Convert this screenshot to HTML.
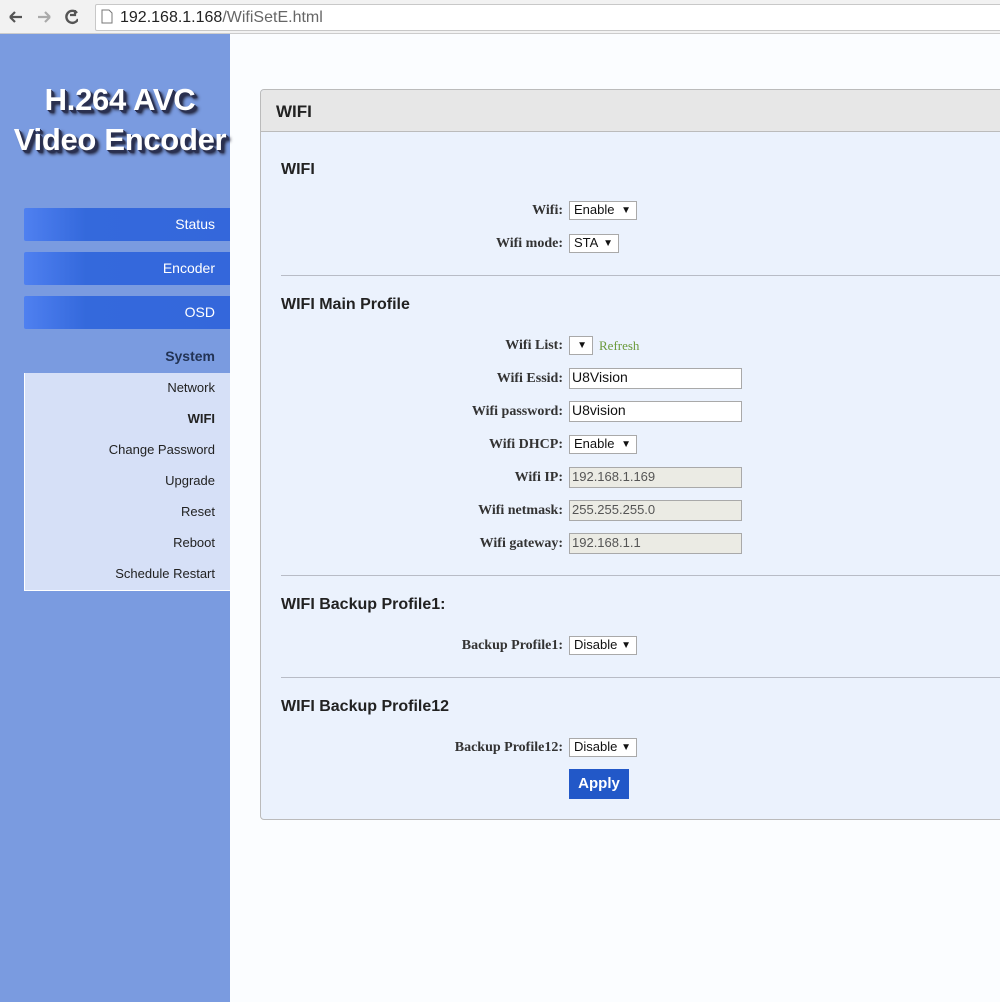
<!DOCTYPE html>
<html><head><meta charset="utf-8"><style>
*{margin:0;padding:0;box-sizing:border-box}
body{width:1000px;height:1002px;overflow:hidden;position:relative;background:#fbfdff;font-family:"Liberation Sans",sans-serif}
.a{position:absolute}
.bar{left:0;top:0;width:1000px;height:34px;background:#f2f2f2;border-bottom:1px solid #ccc}
.url{left:95px;top:4px;width:910px;height:27px;background:#fff;border:1px solid #c8c8c8;border-radius:2px;font-size:16px;color:#222;padding:4px 0 0 24px}
.side{left:0;top:34px;width:230px;height:968px;background:#7a9be0}
.logo{left:0;top:80px;width:240px;text-align:center;color:#fff;font-weight:bold;font-size:31px;line-height:40px;letter-spacing:-0.3px;text-shadow:1px 1px 0 #2a3050,2px 2px 0 #2a3050,3px 3px 1px #2a3050,4px 4px 3px #223}
.btn{left:24px;width:206px;height:33px;background:linear-gradient(90deg,#4f80f0,#3469dc 30%,#3467db);color:#fff;font-size:14px;text-align:right;padding:8px 15px 0 0;border-radius:2px 0 0 2px}
.sys{left:24px;top:348px;width:191px;text-align:right;font-weight:bold;font-size:14px;color:#223355}
.sub{left:24px;top:373px;width:206px;height:218px;background:#d6e0f7;border:1px solid #fff;border-top:none;border-right:none}
.sub div{position:absolute;right:15px;font-size:13px;color:#222}
.panel{left:260px;top:89px;width:760px;height:731px;background:#ebf2fd;border:1px solid #bbb;border-radius:4px}
.ph{left:0;top:0;width:100%;height:42px;background:#e7e7e7;border-bottom:1px solid #bbb;font-weight:bold;font-size:17px;color:#222;padding:12px 0 0 15px;border-radius:4px 0 0 0}
h3{position:absolute;left:281px;font-size:16px;font-weight:bold;color:#222}
.hr{left:281px;width:719px;height:1px;background:#b8bcc6}
.lb{position:absolute;right:437px;font-family:"Liberation Serif",serif;font-weight:bold;font-size:14px;color:#333;text-align:right}
.sel{position:absolute;left:569px;height:19px;background:#fff;border:1px solid #a9a9a9;font-size:13px;line-height:16px;color:#111;padding:0 0 0 4px}
.sel span{position:absolute;right:5px;top:1px;font-size:10px}
.in{position:absolute;left:569px;width:173px;height:21px;background:#fff;border:1px solid #a9a9a9;font-size:14px;line-height:17px;color:#111;padding:0 0 0 2px}
.in.d{background:#ebebe4;color:#555;font-size:13px}
</style></head><body>
<div class="a bar"></div>
<svg class="a" style="left:8px;top:9px" width="70" height="16" viewBox="0 0 70 16"><path d="M2 8h12M2 8l5-5M2 8l5 5" stroke="#555" stroke-width="2.2" fill="none"/><path d="M30 8h12M42 8l-5-5M42 8l-5 5" stroke="#aaa" stroke-width="2.2" fill="none"/><path d="M72 4 A6 6 0 1 0 73 10" transform="translate(-3,0)" stroke="#555" stroke-width="2.4" fill="none"/><path d="M67 1v5h-5" stroke="#555" stroke-width="2.2" fill="none"/></svg>
<div class="a url">192.168.1.168<span style="color:#666">/WifiSetE.html</span></div>
<svg class="a" style="left:101px;top:9px" width="12" height="15"><path d="M1 1h7l3 3v10H1z" fill="#fff" stroke="#777"/></svg>
<div class="a side"></div>
<div class="a logo">H.264 AVC<br>Video Encoder</div>
<div class="a btn" style="top:208px">Status</div>
<div class="a btn" style="top:252px">Encoder</div>
<div class="a btn" style="top:296px">OSD</div>
<div class="a sys">System</div>
<div class="a sub">
<div style="top:7px">Network</div>
<div style="top:38px;font-weight:bold">WIFI</div>
<div style="top:69px">Change Password</div>
<div style="top:100px">Upgrade</div>
<div style="top:131px">Reset</div>
<div style="top:162px">Reboot</div>
<div style="top:193px">Schedule Restart</div>
</div>
<div class="a" style="left:226px;top:414px;width:0;height:0;border:5px solid transparent;border-right-color:#fbfdff"></div>
<div class="a panel"><div class="a ph">WIFI</div></div>
<h3 style="top:161px">WIFI</h3>
<div class="lb" style="top:203px">Wifi:</div><div class="sel" style="top:201px;width:68px">Enable<span>▼</span></div>
<div class="lb" style="top:236px">Wifi mode:</div><div class="sel" style="top:234px;width:50px">STA<span>▼</span></div>
<div class="a hr" style="top:275px"></div>
<h3 style="top:296px">WIFI Main Profile</h3>
<div class="lb" style="top:338px">Wifi List:</div><div class="sel" style="top:336px;width:24px"><span>▼</span></div>
<div class="a" style="left:599px;top:338px;font-family:'Liberation Serif',serif;font-size:13px;color:#6a9a3a">Refresh</div>
<div class="lb" style="top:371px">Wifi Essid:</div><div class="in" style="top:368px">U8Vision</div>
<div class="lb" style="top:404px">Wifi password:</div><div class="in" style="top:401px">U8vision</div>
<div class="lb" style="top:437px">Wifi DHCP:</div><div class="sel" style="top:435px;width:68px">Enable<span>▼</span></div>
<div class="lb" style="top:470px">Wifi IP:</div><div class="in d" style="top:467px">192.168.1.169</div>
<div class="lb" style="top:503px">Wifi netmask:</div><div class="in d" style="top:500px">255.255.255.0</div>
<div class="lb" style="top:536px">Wifi gateway:</div><div class="in d" style="top:533px">192.168.1.1</div>
<div class="a hr" style="top:575px"></div>
<h3 style="top:596px">WIFI Backup Profile1:</h3>
<div class="lb" style="top:638px">Backup Profile1:</div><div class="sel" style="top:636px;width:68px">Disable<span>▼</span></div>
<div class="a hr" style="top:677px"></div>
<h3 style="top:698px">WIFI Backup Profile12</h3>
<div class="lb" style="top:740px">Backup Profile12:</div><div class="sel" style="top:738px;width:68px">Disable<span>▼</span></div>
<div class="a" style="left:569px;top:769px;width:60px;height:30px;background:#2258c8;color:#fff;font-weight:bold;font-size:15px;text-align:center;padding-top:6px">Apply</div>
</body></html>
